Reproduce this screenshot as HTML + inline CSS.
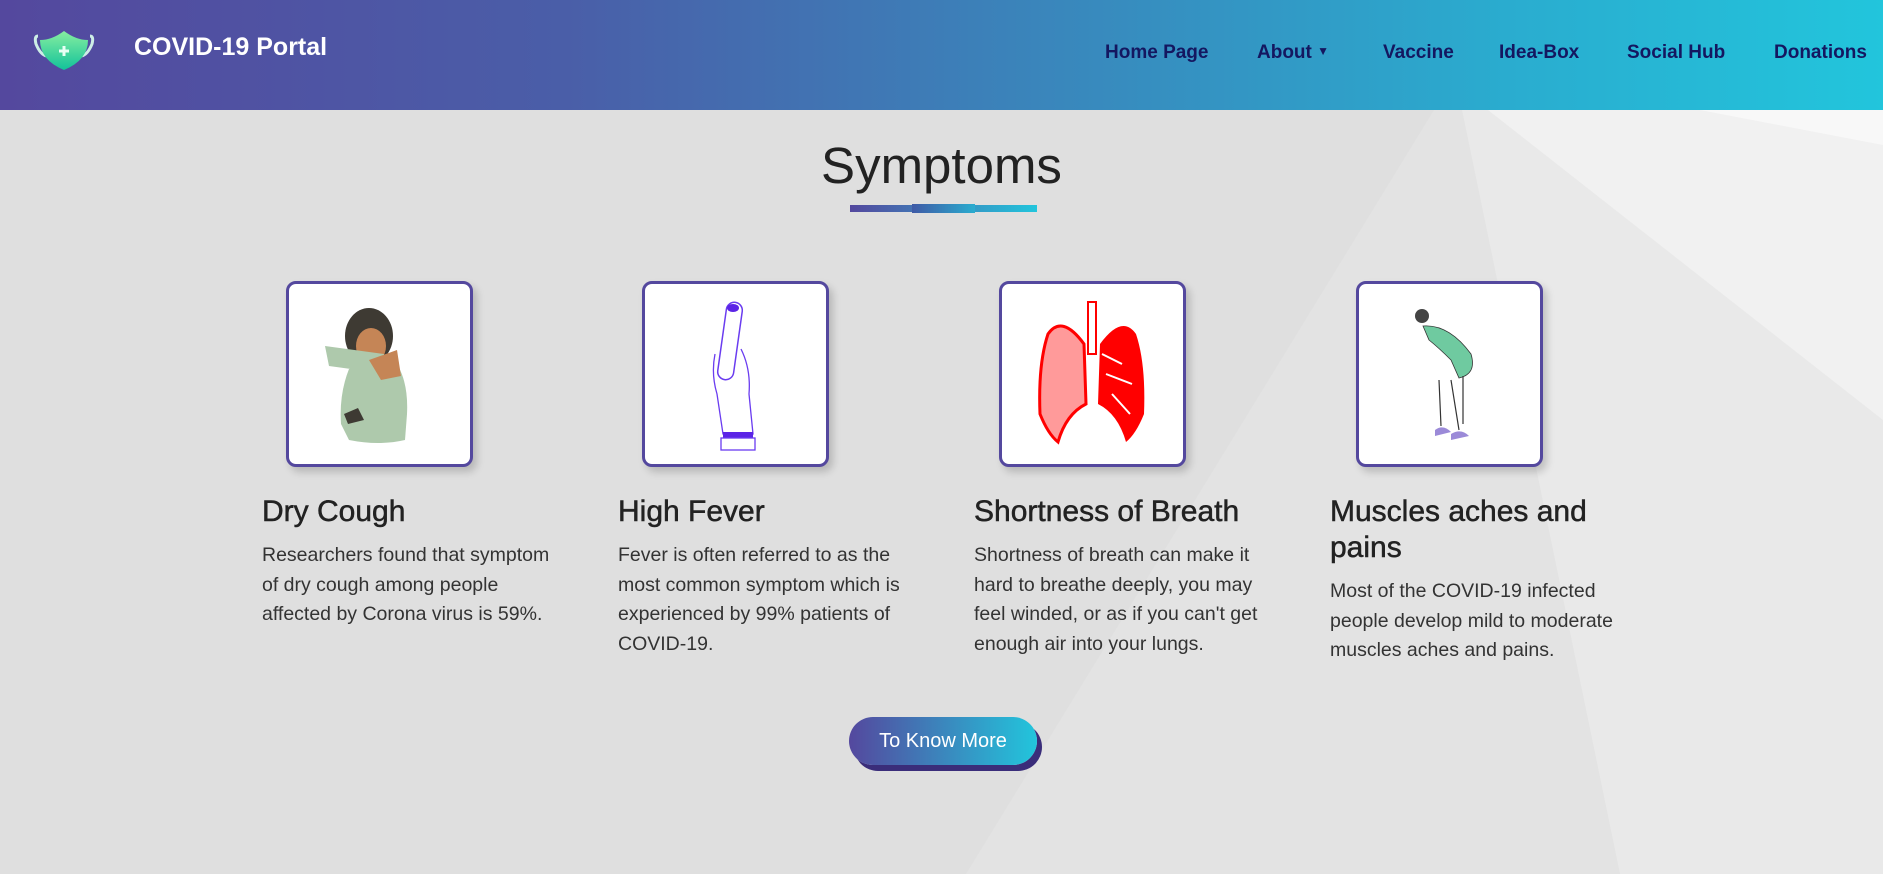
<!DOCTYPE html>
<html><head><meta charset="utf-8"><style>
*{margin:0;padding:0;box-sizing:border-box}
body{width:1883px;height:874px;overflow:hidden;background:#dfdfdf;font-family:"Liberation Sans",sans-serif;position:relative}
.bg{position:absolute;left:0;top:0}
header{position:absolute;left:0;top:0;width:1883px;height:110px;background:linear-gradient(90deg,#54489e 0%,#4a5ea8 30%,#3a85bb 55%,#2aaccf 80%,#22c5dc 100%)}
.brand{position:absolute;left:134px;top:33px;color:#fff;font-weight:bold;font-size:25px}
nav a{position:absolute;top:42px;color:#141760;font-weight:bold;font-size:19px;text-decoration:none}
h1{position:absolute;left:0;width:1883px;text-align:center;top:136px;font-size:51px;font-weight:normal;color:#222}
.ul{position:absolute;left:850px;top:205px;width:187px;height:7px;background:linear-gradient(90deg,#54489e,#22c5dc)}
.ul2{position:absolute;left:912px;top:204px;width:63px;height:9px;background:linear-gradient(90deg,#3f5aa6,#2aaccf)}
.card{position:absolute;top:281px;width:187px;height:186px;background:#fff;border:3px solid #54489e;border-radius:10px;box-shadow:4px 5px 8px rgba(0,0,0,.18)}
.card svg{position:absolute;left:0;top:0}
h3{position:absolute;font-size:30px;font-weight:normal;color:#222;line-height:36px;width:300px;-webkit-text-stroke:.5px #222}
p{position:absolute;font-size:19.5px;color:#333;line-height:29.5px;width:300px}
.btn{position:absolute;left:849px;top:717px;width:188px;height:48px;border-radius:24px;background:linear-gradient(90deg,#54489e,#22c5dc);color:#fff;font-size:20px;text-align:center;line-height:48px;box-shadow:5px 6px 0 #3a2d7a}
</style></head><body>
<svg class="bg" width="1883" height="874">
<polygon points="1434,110 1462,110 1620,874 966,874" fill="#e3e3e3"/>
<polygon points="1462,110 1883,110 1883,874 1620,874" fill="#e9e9e9"/>
<polygon points="1488,110 1883,110 1883,420" fill="#f1f1f1"/>
<polygon points="1700,110 1883,110 1883,145" fill="#f8f8f8"/>
</svg>
<header>
<svg style="position:absolute;left:32px;top:28px" width="64" height="44" viewBox="0 0 64 44">
<defs><linearGradient id="m" x1="0" y1="0" x2="0" y2="1"><stop offset="0" stop-color="#86eea0"/><stop offset="1" stop-color="#12c29a"/></linearGradient></defs>
<path d="M6 8 Q2 8 4 16 Q8 26 14 28" stroke="#cdeee6" stroke-width="3" fill="none"/>
<path d="M58 8 Q62 8 60 16 Q56 26 50 28" stroke="#cdeee6" stroke-width="3" fill="none"/>
<path d="M8 12 Q20 12 32 3 Q44 12 56 12 Q56 32 32 42 Q8 32 8 12Z" fill="url(#m)"/>
<path d="M32 18v10M27 23h10" stroke="#e8fff4" stroke-width="3"/>
</svg>
<div class="brand">COVID-19 Portal</div>
<nav>
<a style="left:1105px">Home Page</a>
<a style="left:1257px">About <span style="font-size:12px;vertical-align:3px">&#9660;</span></a>
<a style="left:1383px">Vaccine</a>
<a style="left:1499px">Idea-Box</a>
<a style="left:1627px">Social Hub</a>
<a style="left:1774px">Donations</a>
</nav>
</header>
<h1>Symptoms</h1>
<div class="ul"></div><div class="ul2"></div>

<div class="card" style="left:286px"><svg width="181" height="180">
<ellipse cx="80" cy="52" rx="24" ry="28" fill="#3e3a33"/>
<ellipse cx="82" cy="62" rx="15" ry="18" fill="#c58556"/>
<path d="M52 140 Q50 110 60 85 L100 70 Q120 90 118 130 L116 156 Q90 162 60 156Z" fill="#aec9ac"/>
<path d="M36 62 L95 70 L98 90 L40 82Z" fill="#aec9ac"/>
<path d="M80 76 L108 66 L112 92 L92 96Z" fill="#c58556"/>
<path d="M55 130 l14 -6 l6 12 l-16 4Z" fill="#3e3a33"/>
</svg></div>
<div class="card" style="left:642px"><svg width="181" height="180">
<rect x="77" y="18" width="16" height="78" rx="8" fill="#fff" stroke="#6a3cf0" stroke-width="1.5" transform="rotate(8 85 57)"/>
<ellipse cx="88" cy="24" rx="6" ry="4" fill="#5b24e6"/>
<path d="M70 70 Q66 90 72 110 L78 150 L108 150 L104 110 Q106 85 96 65" fill="none" stroke="#6a3cf0" stroke-width="1.3"/>
<rect x="78" y="148" width="30" height="6" fill="#5b24e6"/>
<rect x="76" y="154" width="34" height="12" fill="none" stroke="#6a3cf0" stroke-width="1.3"/>
</svg></div>
<div class="card" style="left:999px"><svg width="181" height="180">
<rect x="86" y="18" width="8" height="52" fill="none" stroke="#f00" stroke-width="2"/>
<path d="M82 60 Q60 30 46 50 Q36 80 38 130 Q46 150 56 158 Q64 130 84 120 Z" fill="#ff9a9a" stroke="#f00" stroke-width="3"/>
<path d="M98 60 Q120 30 134 50 Q144 80 142 130 Q134 150 124 158 Q116 130 96 120 Z" fill="#f00"/>
<path d="M100 70 L120 80 M104 90 L130 100 M110 110 L128 130" stroke="#fff" stroke-width="2"/>
</svg></div>
<div class="card" style="left:1356px"><svg width="181" height="180">
<circle cx="63" cy="32" r="7" fill="#444"/>
<path d="M64 42 Q90 40 112 70 Q118 90 100 94 L92 76 Q80 64 70 56Z" fill="#6fcaa0" stroke="#333" stroke-width=".8"/>
<path d="M80 96 L82 142 M92 96 L100 146 M104 92 L104 140" stroke="#333" stroke-width="1.2" fill="none"/>
<path d="M76 146 Q84 140 92 148 L76 152Z" fill="#9b8ad8"/>
<path d="M92 150 Q102 144 110 152 L92 156Z" fill="#9b8ad8"/>
</svg></div>

<h3 style="left:262px;top:494px">Dry Cough</h3>
<p style="left:262px;top:541px">Researchers found that symptom of dry cough among people affected by Corona virus is 59%.</p>
<h3 style="left:618px;top:494px">High Fever</h3>
<p style="left:618px;top:541px">Fever is often referred to as the most common symptom which is experienced by 99% patients of COVID-19.</p>
<h3 style="left:974px;top:494px">Shortness of Breath</h3>
<p style="left:974px;top:541px">Shortness of breath can make it hard to breathe deeply, you may feel winded, or as if you can't get enough air into your lungs.</p>
<h3 style="left:1330px;top:494px;width:290px">Muscles aches and pains</h3>
<p style="left:1330px;top:577px;width:305px">Most of the COVID-19 infected people develop mild to moderate muscles aches and pains.</p>

<div class="btn">To Know More</div>
</body></html>
